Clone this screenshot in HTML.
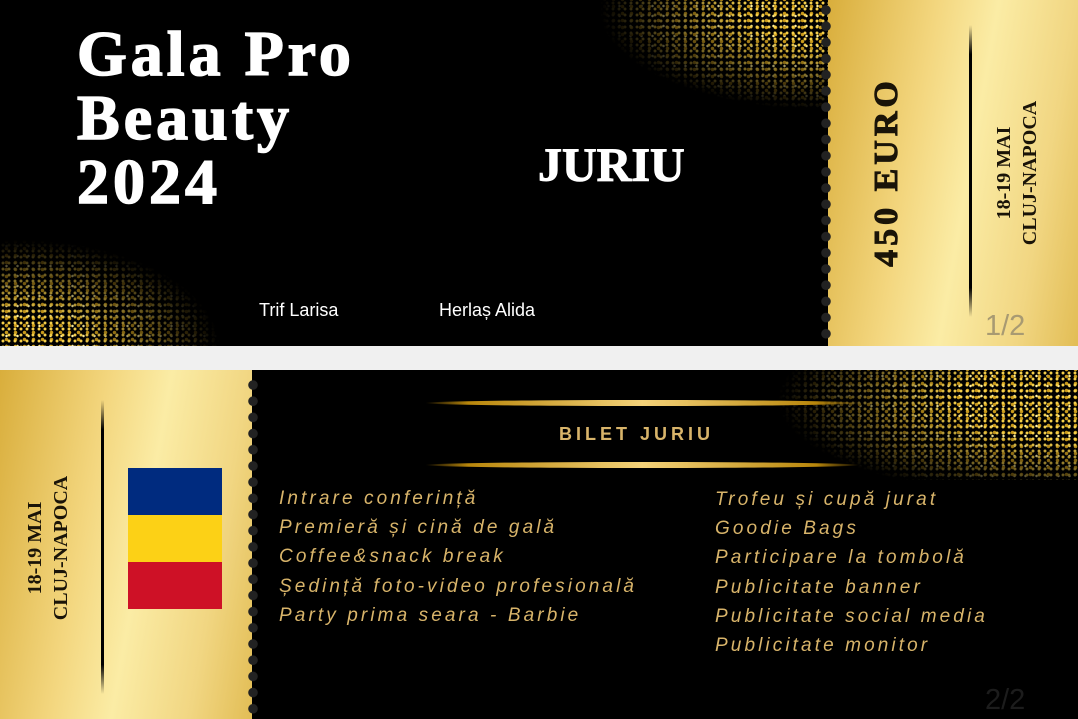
<!DOCTYPE html>
<html><head><meta charset="utf-8"><style>
*{margin:0;padding:0;box-sizing:border-box}
body{width:1078px;height:719px;background:#f0f0f0;position:relative;overflow:hidden;font-family:"Liberation Sans",sans-serif}
.blk{position:absolute;background:#000}
.gold{position:absolute;background:linear-gradient(100deg,#d9ae3c 0%,#f3d67e 35%,#fbeca5 55%,#f1d682 80%,#e2bd55 100%)}
.gl{position:absolute;background:
radial-gradient(circle,#f5cf4a 1.2px,transparent 1.8px) 0 0/6px 6px,
radial-gradient(circle,#c99a1c 1.5px,transparent 2px) 2px 3px/9px 7px,
radial-gradient(circle,#fff0a0 1px,transparent 1.5px) 1px 1px/11px 10px;}
.serif{font-family:"Liberation Serif",serif;font-weight:bold}
.dots{position:absolute;width:12px;background:radial-gradient(circle at 6px 6px,#222 4.5px,transparent 5px) 0 0/12px 16.2px}
.vt{position:absolute;transform:rotate(-90deg);transform-origin:center;white-space:nowrap;text-align:center;color:#1a1408}
.li{position:absolute;color:#d8b46a;font-style:italic;font-size:19px;letter-spacing:3.1px;line-height:29.2px}
.bar{position:absolute;height:6px;border-radius:50%;background:linear-gradient(90deg,transparent,#b8860b 10%,#f5d37a 50%,#b8860b 90%,transparent)}
</style></head><body>
<div class="blk" style="left:0;top:0;width:830px;height:346px"></div>
<div class="gl" style="left:0;top:200px;width:230px;height:146px;-webkit-mask-image:radial-gradient(ellipse 200px 110px at 20px 150px,#000 30%,transparent 100%)"></div>
<div class="gl" style="left:580px;top:0;width:250px;height:120px;-webkit-mask-image:radial-gradient(ellipse 230px 100px at 250px 10px,#000 35%,transparent 100%)"></div>
<div class="gold" style="left:828px;top:0;width:250px;height:346px"></div>
<div class="dots" style="left:820px;top:4px;height:338px"></div>
<div class="serif" style="position:absolute;left:77px;top:22px;color:#fff;font-size:64px;line-height:64px;letter-spacing:4px;-webkit-text-stroke:1.5px #fff">Gala Pro<br>Beauty<br>2024</div>
<div class="serif" style="position:absolute;left:538px;top:138px;color:#fff;font-size:48px;-webkit-text-stroke:1px #fff">JURIU</div>
<div style="position:absolute;left:259px;top:300px;color:#fff;font-size:18px">Trif Larisa</div>
<div style="position:absolute;left:439px;top:300px;color:#fff;font-size:18px">Herlaș Alida</div>
<div style="position:absolute;left:969px;top:25px;width:3px;height:292px;background:linear-gradient(#0000,#000 10%,#000 90%,#0000)"></div>
<div class="vt serif" style="left:757px;top:153px;width:260px;font-size:34px;letter-spacing:4px;-webkit-text-stroke:1px #1a1408">450 EURO</div>
<div class="vt serif" style="left:917px;top:147px;width:200px;font-size:20px;line-height:26px">18-19 MAI<br>CLUJ-NAPOCA</div>
<div style="position:absolute;left:985px;top:310px;color:#a89a72;font-size:29px">1/2</div>

<div class="blk" style="left:252px;top:370px;width:826px;height:349px"></div>
<div class="gl" style="left:700px;top:370px;width:378px;height:110px;-webkit-mask-image:radial-gradient(ellipse 300px 100px at 378px 30px,#000 40%,transparent 100%)"></div>
<div class="gold" style="left:0;top:370px;width:252px;height:349px"></div>
<div class="dots" style="left:247px;top:379px;height:340px"></div>
<div style="position:absolute;left:101px;top:400px;width:3px;height:294px;background:linear-gradient(#0000,#000 10%,#000 90%,#0000)"></div>
<div class="vt serif" style="left:-52px;top:522px;width:200px;font-size:20px;line-height:26px">18-19 MAI<br>CLUJ-NAPOCA</div>
<div style="position:absolute;left:128px;top:468px;width:94px;height:47px;background:#002b7f"></div>
<div style="position:absolute;left:128px;top:515px;width:94px;height:47px;background:#fcd116"></div>
<div style="position:absolute;left:128px;top:562px;width:94px;height:47px;background:#ce1126"></div>
<div class="bar" style="left:425px;top:400px;width:435px"></div>
<div class="bar" style="left:425px;top:462px;width:435px"></div>
<div style="position:absolute;left:559px;top:424px;color:#d8b46a;font-size:18px;font-weight:bold;letter-spacing:4px">BILET JURIU</div>
<div class="li" style="left:279px;top:484px">Intrare conferință<br>Premieră și cină de gală<br>Coffee&amp;snack break<br>Ședință foto-video profesională<br>Party prima seara - Barbie</div>
<div class="li" style="left:715px;top:485px">Trofeu și cupă jurat<br>Goodie Bags<br>Participare la tombolă<br>Publicitate banner<br>Publicitate social media<br>Publicitate monitor</div>
<div style="position:absolute;left:985px;top:684px;color:#1c1c1c;font-size:29px">2/2</div>
</body></html>
